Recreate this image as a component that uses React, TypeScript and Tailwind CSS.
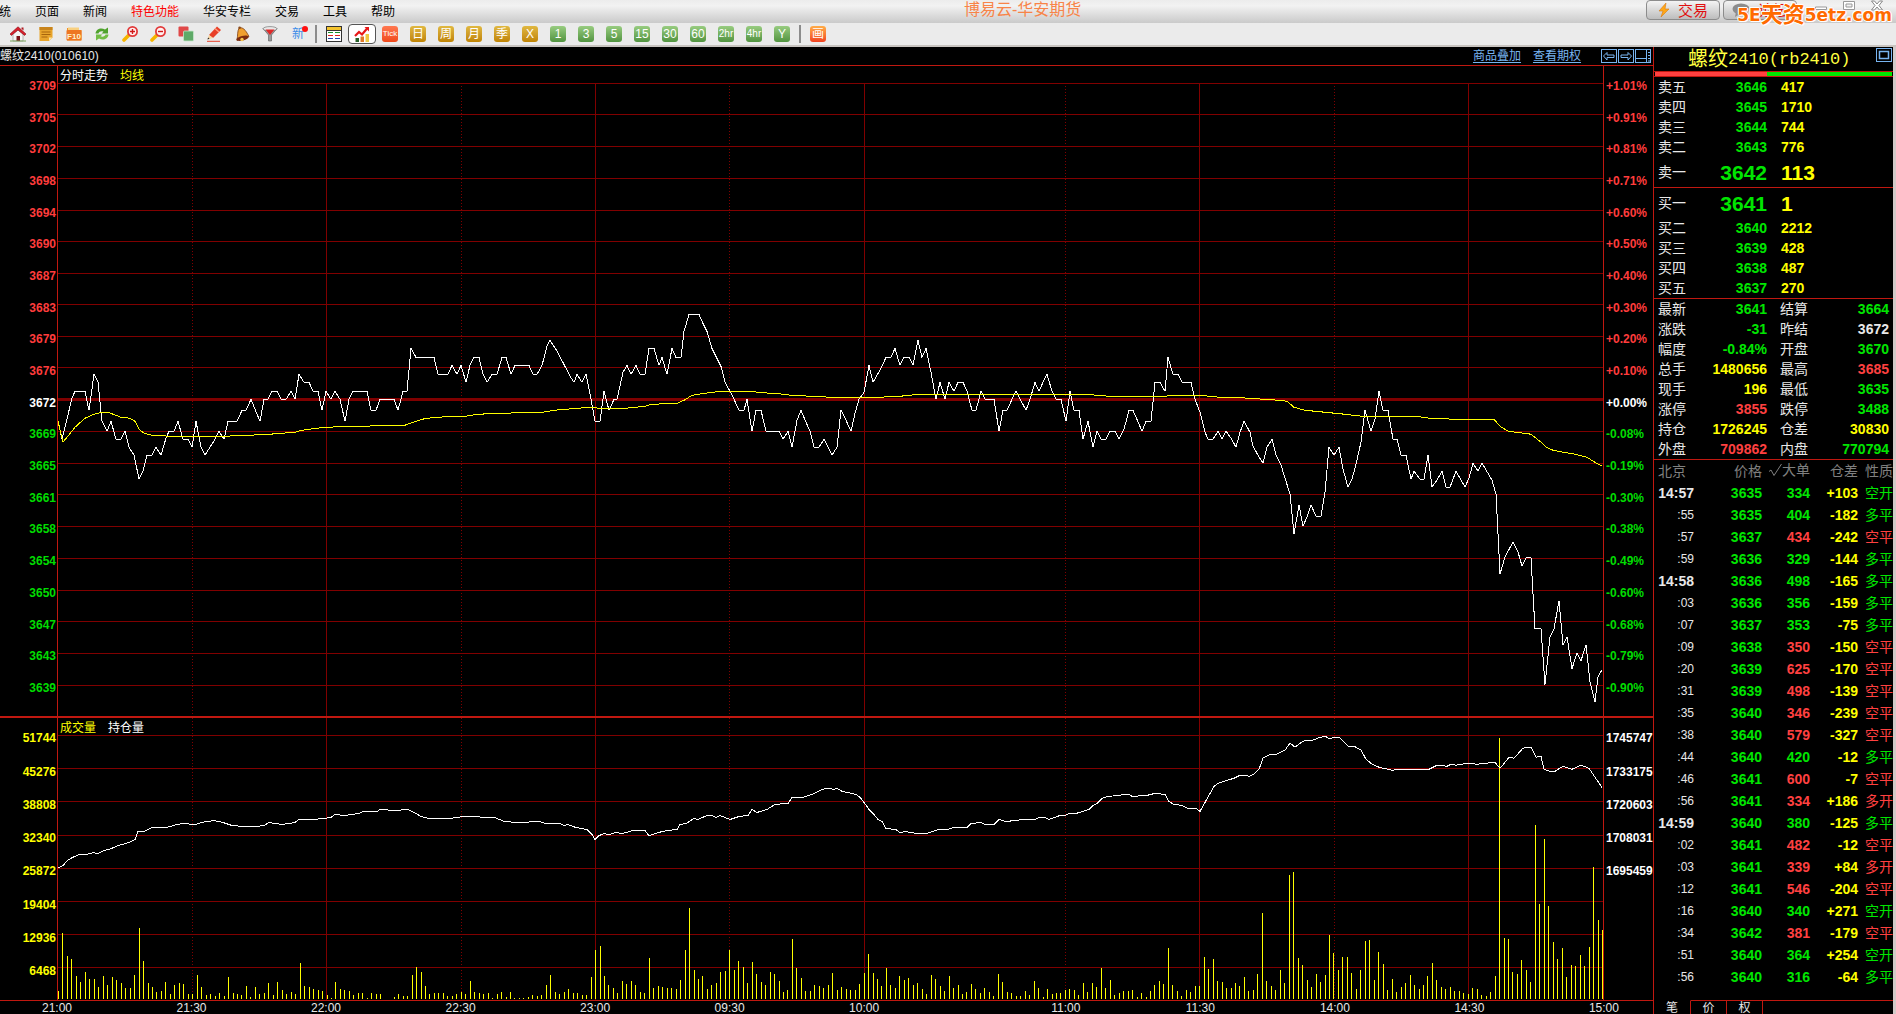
import React from "react";

const CJK = "font-['Liberation_Sans','Noto_Sans_CJK_SC',sans-serif]";

/* ---------- market data ---------- */

const PRICE_LINE =
  "58,422 62,440 72,399 75,392 85,392 89,411 94,375 98,383 102,422 107,432 111,422 116,440 121,440 125,432 129,448 134,456 139,480 143,472 147,456 152,456 156,448 161,456 166,439 169,432 174,432 178,422 183,440 188,440 192,448 196,422 201,448 205,456 210,448 215,440 219,432 224,440 228,422 237,422 242,411 246,411 251,400 255,410 260,422 264,400 268,400 272,392 277,392 281,400 286,400 291,392 295,400 299,375 304,383 309,383 313,392 318,392 322,411 326,392 331,400 335,392 340,400 345,422 349,400 353,392 367,392 371,411 376,411 380,400 394,400 398,411 403,392 407,392 411,349 416,358 434,358 438,375 448,375 452,366 457,375 461,366 466,383 470,366 474,358 479,358 483,375 487,383 492,375 497,375 502,358 506,358 511,375 515,366 529,366 533,375 537,375 542,366 547,347 550,341 556,350 565,367 570,377 574,383 577,375 582,383 586,375 591,400 595,422 600,422 604,392 609,411 614,400 617,400 623,373 627,366 631,375 636,366 640,375 645,375 649,349 654,349 659,366 662,358 667,375 672,349 676,358 681,358 684,332 689,315 699,315 703,324 707,332 712,349 721,367 725,383 730,392 734,400 739,411 744,411 747,400 752,432 756,411 761,411 766,432 779,432 783,440 788,432 792,448 797,421 801,411 806,423 810,432 814,448 819,448 824,440 828,448 832,456 837,448 841,411 846,421 851,432 855,414 859,400 864,393 869,366 873,383 882,367 886,358 891,358 895,349 900,366 904,358 909,358 913,366 918,341 922,358 926,349 931,373 936,400 940,383 945,400 949,383 954,392 958,383 963,383 967,392 972,411 976,411 981,392 985,400 994,400 999,432 1003,411 1007,411 1012,400 1016,392 1026,411 1030,400 1035,383 1039,392 1043,383 1047,375 1052,392 1056,400 1061,400 1066,422 1070,392 1074,411 1079,411 1083,440 1088,422 1093,448 1097,432 1101,440 1106,440 1110,432 1115,432 1119,440 1124,430 1129,411 1133,411 1142,432 1146,422 1151,422 1155,383 1160,383 1165,392 1168,358 1173,375 1178,375 1182,383 1191,383 1195,400 1200,413 1205,433 1208,440 1213,440 1218,432 1222,440 1226,432 1231,439 1236,448 1240,433 1244,422 1250,433 1253,447 1258,456 1263,464 1267,448 1272,440 1276,456 1281,466 1285,479 1290,495 1294,535 1299,506 1303,527 1307,518 1311,506 1316,517 1321,517 1325,493 1329,448 1334,456 1339,448 1343,470 1348,488 1352,480 1356,465 1361,443 1365,411 1371,432 1375,420 1379,392 1383,411 1388,411 1393,440 1397,440 1401,456 1406,456 1411,480 1414,472 1420,480 1424,480 1428,456 1432,488 1437,481 1442,472 1446,488 1450,488 1456,472 1465,488 1469,479 1473,464 1478,472 1482,464 1492,481 1496,495 1500,575 1505,558 1513,543 1518,553 1522,567 1526,559 1531,559 1535,630 1541,630 1545,686 1550,638 1554,630 1559,602 1563,646 1567,638 1572,670 1577,654 1581,662 1586,646 1590,683 1595,703 1598,678 1602,671";

const AVERAGE_LINE =
  "58,422 63,443 75,428 85,419 94,415 102,413 108,413 121,418 130,419 135,422 139,430 144,434 152,436 170,437 225,437 250,436 270,435 295,433 302,431 325,428 360,427 405,426 413,423 422,420 435,418 465,417 478,415 500,414 543,413 554,411 590,408 600,409 625,409 645,407 652,405 677,404 684,401 692,396 705,394 720,392 748,392 770,394 785,395 790,396 812,397 832,398 878,398 900,397 918,395 1085,395 1110,397 1165,397 1172,396 1200,396 1220,398 1255,399 1262,400 1280,401 1287,402 1294,408 1305,411 1325,413 1345,415 1362,417 1415,417 1430,419 1455,420 1494,420 1500,427 1508,432 1531,435 1541,443 1546,448 1553,451 1563,453 1575,455 1587,458 1593,462 1602,467";

const INTEREST_LINE =
  "58,868 63,866 67,861 72,858 79,855 86,855 93,853 98,854 104,851 111,849 118,846 125,844 131,842 135,840 138,832 144,832 152,828 166,828 177,825 183,824 196,825 201,823 214,821 223,823 232,826 245,827 255,827 264,826 269,823 282,825 295,823 299,820 314,820 331,818 335,815 345,816 359,814 363,812 377,812 380,810 395,811 408,810 416,814 421,817 429,819 450,819 464,817 495,818 504,822 518,823 539,822 546,824 560,824 564,826 568,825 576,828 587,830 592,835 595,840 599,836 604,834 609,835 616,833 622,834 633,831 645,831 649,836 658,833 667,831 677,830 680,825 686,824 694,819 698,820 707,816 712,816 716,818 720,816 730,820 739,817 748,816 752,810 757,813 767,810 775,805 788,804 792,798 803,798 812,795 822,790 828,789 834,790 837,789 842,792 856,795 860,798 864,803 869,810 874,815 878,820 882,822 886,829 896,830 900,833 905,832 917,834 927,834 932,832 939,830 947,830 954,828 967,828 971,824 981,823 985,825 994,825 999,820 1006,822 1024,820 1035,820 1039,818 1045,818 1049,820 1060,816 1065,816 1069,814 1076,814 1089,810 1093,806 1097,804 1102,799 1108,797 1120,796 1122,795 1129,795 1132,797 1147,796 1155,794 1165,795 1169,802 1174,805 1182,806 1188,809 1196,809 1200,812 1205,803 1214,787 1218,784 1227,781 1234,779 1240,776 1245,776 1249,777 1254,775 1259,770 1263,759 1271,755 1277,755 1285,751 1290,744 1295,748 1303,742 1313,741 1318,739 1325,737 1330,740 1334,738 1339,738 1348,747 1354,747 1361,751 1366,760 1372,765 1379,768 1392,771 1400,770 1429,770 1437,766 1447,767 1451,765 1456,766 1468,764 1477,765 1495,763 1499,768 1501,768 1509,758 1514,759 1523,749 1531,748 1536,758 1541,757 1544,770 1550,772 1555,772 1563,767 1572,770 1581,766 1589,769 1595,778 1602,788";

// One bar per trading minute, 21:00 to 15:00.
const VOLUME = [
  8, 66, 43, 40, 23, 17, 27, 20, 20, 12, 23, 14, 22, 19, 16, 11, 11, 24, 71, 38, 16, 12, 7, 8, 17, 5, 14, 16, 15, 5,
  5, 24, 12, 4, 5, 3, 6, 3, 22, 6, 5, 4, 13, 2, 12, 5, 6, 16, 4, 17, 9, 5, 7, 5, 36, 13, 12, 10, 9, 8,
  4, 1, 17, 10, 9, 8, 4, 6, 6, 1, 6, 5, 5, 0, 0, 2, 5, 3, 3, 24, 32, 27, 13, 5, 6, 6, 6, 3, 3, 5,
  7, 5, 18, 7, 6, 5, 6, 1, 5, 7, 2, 7, 1, 1, 1, 2, 4, 3, 4, 14, 24, 7, 5, 7, 10, 6, 6, 4, 4, 22,
  49, 53, 23, 14, 11, 6, 18, 15, 18, 14, 7, 6, 41, 11, 13, 12, 11, 11, 10, 19, 49, 91, 29, 20, 23, 10, 14, 16, 27, 28,
  49, 29, 38, 32, 16, 37, 25, 17, 14, 27, 25, 18, 7, 9, 60, 31, 21, 8, 8, 14, 13, 11, 14, 26, 9, 12, 10, 9, 9, 15,
  26, 45, 26, 20, 13, 31, 14, 11, 23, 19, 21, 14, 16, 10, 5, 24, 20, 13, 8, 23, 11, 14, 5, 7, 15, 10, 6, 11, 7, 3,
  25, 17, 7, 6, 3, 3, 8, 4, 18, 11, 2, 10, 5, 6, 6, 9, 10, 9, 4, 16, 7, 16, 12, 31, 11, 19, 4, 6, 8, 8,
  9, 2, 6, 2, 8, 14, 18, 15, 51, 14, 8, 3, 9, 7, 13, 13, 42, 30, 40, 18, 17, 11, 11, 16, 13, 22, 8, 9, 25, 86,
  18, 13, 9, 29, 16, 124, 127, 41, 34, 19, 12, 25, 17, 24, 64, 46, 29, 42, 42, 26, 10, 29, 58, 59, 19, 47, 35, 9, 20, 7,
  12, 16, 24, 14, 10, 14, 23, 36, 19, 12, 10, 12, 8, 8, 6, 5, 11, 10, 4, 3, 7, 23, 260, 61, 60, 27, 25, 39, 29, 17,
  174, 95, 160, 93, 57, 40, 51, 22, 34, 33, 44, 33, 52, 132, 79, 69,
];

const PRICES = [3709, 3705, 3702, 3698, 3694, 3690, 3687, 3683, 3679, 3676, 3672, 3669, 3665, 3661, 3658, 3654, 3650, 3647, 3643, 3639];
const PERCENTS = ["+1.01%", "+0.91%", "+0.81%", "+0.71%", "+0.60%", "+0.50%", "+0.40%", "+0.30%", "+0.20%", "+0.10%", "+0.00%", "-0.08%", "-0.19%", "-0.30%", "-0.38%", "-0.49%", "-0.60%", "-0.68%", "-0.79%", "-0.90%"];
const PRICE_GRID = [83, 114, 146, 178, 210, 241, 273, 305, 337, 368, 400, 432, 464, 495, 527, 559, 591, 622, 654, 686];
const VOLUME_GRID = [736, 769, 802, 835, 868, 901, 934, 967];
const VOLUMES = ["51744", "45276", "38808", "32340", "25872", "19404", "12936", "6468"];
const INTERESTS = ["1745747", "1733175", "1720603", "1708031", "1695459", "", "", ""];
const HOURS = [326, 595, 864, 1199, 1468];
const HALVES = [192, 461, 729, 1065, 1334];
const TIMES = ["21:00", "21:30", "22:00", "22:30", "23:00", "09:30", "10:00", "11:00", "11:30", "14:00", "14:30", "15:00"];

const G = "text-[#00e600]";
const R = "text-[#ff4040]";
const Y = "text-[#ffff00]";
const W = "text-[#e8e8e8]";

const ASKS = [["卖五", "3646", "417"], ["卖四", "3645", "1710"], ["卖三", "3644", "744"], ["卖二", "3643", "776"], ["卖一", "3642", "113"]];
const BIDS = [["买一", "3641", "1"], ["买二", "3640", "2212"], ["买三", "3639", "428"], ["买四", "3638", "487"], ["买五", "3637", "270"]];

const QUOTES = [
  ["最新", "3641", G, "结算", "3664", G],
  ["涨跌", "-31", G, "昨结", "3672", W],
  ["幅度", "-0.84%", G, "开盘", "3670", G],
  ["总手", "1480656", Y, "最高", "3685", R],
  ["现手", "196", Y, "最低", "3635", G],
  ["涨停", "3855", R, "跌停", "3488", G],
  ["持仓", "1726245", Y, "仓差", "30830", Y],
  ["外盘", "709862", R, "内盘", "770794", G],
];

const TICKS: [string, number, number, string, string, string][] = [
  ["14:57", 3635, 334, "+103", "空开", G],
  [":55", 3635, 404, "-182", "多平", G],
  [":57", 3637, 434, "-242", "空平", R],
  [":59", 3636, 329, "-144", "多平", G],
  ["14:58", 3636, 498, "-165", "多平", G],
  [":03", 3636, 356, "-159", "多平", G],
  [":07", 3637, 353, "-75", "多平", G],
  [":09", 3638, 350, "-150", "空平", R],
  [":20", 3639, 625, "-170", "空平", R],
  [":31", 3639, 498, "-139", "空平", R],
  [":35", 3640, 346, "-239", "空平", R],
  [":38", 3640, 579, "-327", "空平", R],
  [":44", 3640, 420, "-12", "多平", G],
  [":46", 3641, 600, "-7", "空平", R],
  [":56", 3641, 334, "+186", "多开", R],
  ["14:59", 3640, 380, "-125", "多平", G],
  [":02", 3641, 482, "-12", "空平", R],
  [":03", 3641, 339, "+84", "多开", R],
  [":12", 3641, 546, "-204", "空平", R],
  [":16", 3640, 340, "+271", "空开", G],
  [":34", 3642, 381, "-179", "空平", R],
  [":51", 3640, 364, "+254", "空开", G],
  [":56", 3640, 316, "-64", "多平", G],
];

/* ---------- toolbar icons ---------- */

const icon = (label: string, art: React.ReactNode) => ({ label, art });

const TOOLS = [
  icon("首页", <>
    <path d="M3 8v7h10V8L8 4z" fill="#f4f4f4" stroke="#8a8a8a" strokeWidth=".6" />
    <path d="M8 .8 0 8l1.400 1.400L8 4l6.600 5.400L16 8z" fill="#d8202c" stroke="#8c0c16" strokeWidth=".6" />
    <path d="M11.500 1.500h2v3l-2-1.800z" fill="#b01820" />
    <path d="M6.500 10h3.500v5H6.500z" fill="#7c1218" />
    <path d="M0 15h16" stroke="#7ba45c" strokeWidth="1" />
  </>),
  icon("公告", <>
    <path d="M1.500 1h13v10.500L11 15H1.500z" fill="#e8a52c" />
    <path d="M1.500 1h13v3h-13z" fill="#c8841c" />
    <path d="M3.500 6h9M3.500 8.500h9M3.500 11h6" stroke="#a8650c" strokeWidth="1" />
    <path d="M14.500 11.500H11V15z" fill="#fce2a0" />
  </>),
  icon("F10资料", <>
    <path d="M1 2h6l1 2h7.500v10.500H1z" fill="#f0902c" />
    <path d="M2 1.500h11V5H2z" fill="#f8d080" />
    <rect x=".5" y="4" width="15" height="10.500" rx="1" fill="#ee7722" />
    <text x="8" y="12.500" textAnchor="middle" fontSize="8" fontWeight="700" fill="#fff3d0" fontFamily="Liberation Sans">F10</text>
  </>),
  icon("刷新", <>
    <path d="M1.500 7.500C2 3 7 1 11 3.500L14 1.500v6H7.500l2-1.800C7.500 4.800 5 5.500 4.500 7.500z" fill="#4fa22c" />
    <path d="M14.500 8.500C14 13 9 15 5 12.500L2 14.500v-6h6.500l-2 1.800c2 .9 4.500.2 5-1.800z" fill="#72bd45" />
  </>),
  icon("放大", <>
    <path d="M6.500 9.500 2 14" stroke="#f5b400" strokeWidth="3.600" strokeLinecap="round" />
    <circle cx="10.500" cy="5.500" r="4.600" fill="#fff0f0" stroke="#e23a3a" strokeWidth="1.800" />
    <path d="M8 5.500h5M10.500 3v5" stroke="#d01818" strokeWidth="1.400" />
  </>),
  icon("缩小", <>
    <path d="M6.500 9.500 2 14" stroke="#f5b400" strokeWidth="3.600" strokeLinecap="round" />
    <circle cx="10.500" cy="5.500" r="4.600" fill="#fff0f0" stroke="#e23a3a" strokeWidth="1.800" />
    <path d="M8 5.500h5" stroke="#d01818" strokeWidth="1.400" />
  </>),
  icon("叠加", <>
    <rect x=".5" y=".5" width="10" height="10" rx="1" fill="#e04848" />
    <rect x="5.500" y="5" width="10" height="10" rx="1" fill="#5faa68" stroke="#c8e6cc" strokeWidth=".8" />
  </>),
  icon("画线", <>
    <path d="m3 9 8-8.500 4 3.500-8 8z" fill="#e84028" />
    <path d="m9 2.500 4 3.500" stroke="#ff9c80" strokeWidth="1.400" />
    <path d="m3 9-1.500 4.500L7 12z" fill="#f8d49c" />
    <path d="M1.500 13.500l.6-2 1.400 1.300z" fill="#222" />
    <path d="M1 15.300h13" stroke="#e84028" strokeWidth="1" />
  </>),
  icon("预警", <>
    <path d="M5.500 1.500c5 .2 7 4.500 9.500 9L3 14.500C4 9 3 5 5.500 1.500z" fill="#f0a030" stroke="#7c3c14" strokeWidth=".8" />
    <ellipse cx="8.500" cy="12.200" rx="6.300" ry="2.300" transform="rotate(-14 8.500 12.200)" fill="#7c2c10" />
    <circle cx="8" cy="13.500" r="1.700" fill="#f7c850" />
    <circle cx="5.600" cy="1.800" r="1.300" fill="#8a4a1a" />
  </>),
  icon("筛选", <>
    <path d="M1 2.500 6.500 9v6h3V9L15 2.500z" fill="#9a9a9a" stroke="#5a5a5a" strokeWidth=".6" />
    <ellipse cx="8" cy="2.800" rx="7" ry="2.200" fill="#e8e8e8" stroke="#777" strokeWidth=".7" />
    <path d="M3.500 3.500h9L8 9z" fill="#e02828" />
  </>),
];

function ToolButton({ label, children, active }: { label: string; children: React.ReactNode; active?: boolean }) {
  return (
    <button
      type="button"
      aria-label={label}
      title={label}
      className={active ? "flex h-5 w-7 items-center justify-center rounded-sm border border-[#555] bg-white" : "flex h-5 w-7 items-center justify-center"}
    >
      {children}
    </button>
  );
}

const badge = "flex h-4 w-4 items-center justify-center rounded-[3px] text-white leading-none ";
const gold = "bg-linear-to-b from-[#e0b840] to-[#c08400] text-[12px]";
const green = "bg-linear-to-b from-[#98cc80] to-[#529440] text-[12px]";
const greenSmall = "bg-linear-to-b from-[#98cc80] to-[#529440] text-[10px]";

function Toolbar() {
  return (
    <div role="toolbar" aria-label="工具栏" className="flex h-[22px] shrink-0 items-center bg-[#ebebeb] pl-1">
      {TOOLS.map((t) => (
        <ToolButton key={t.label} label={t.label}>
          <svg viewBox="0 0 16 16" className="h-4 w-4">{t.art}</svg>
        </ToolButton>
      ))}
      <button type="button" className="relative flex h-5 w-7 items-center justify-center text-[12px] leading-none text-[#3c8ce8]">
        新
        <span className="absolute top-0.5 right-1 h-1.5 w-1.5 rounded-full bg-[#ff1010]" />
      </button>
      <span className="mx-[3px] h-[18px] w-0.5 bg-[#8c8c8c]" />
      <ToolButton label="报价列表">
        <svg viewBox="0 0 16 16" className="h-4 w-4" shapeRendering="crispEdges">
          <rect x=".5" y=".5" width="15" height="15" fill="#fff" stroke="#333" />
          <path d="M1 2.500h14" stroke="#f4c430" strokeWidth="3" />
          <path d="M1 4.500h14" stroke="#333" />
          <path d="M2 6.500h5M9 6.500h5" stroke="#18902c" />
          <path d="M2 9.500h5M9 9.500h5" stroke="#e02020" />
          <path d="M2 12.500h5M9 12.500h5" stroke="#2040b0" />
        </svg>
      </ToolButton>
      <ToolButton label="分时走势" active>
        <svg viewBox="0 0 16 16" className="h-4 w-4">
          <path d="M1.500 12h3.500v4H1.500z" fill="#286028" />
          <path d="M6.500 10.500H10V16H6.500z" fill="#e07828" />
          <path d="M11.500 8H15v8h-3.500z" fill="#f0c840" />
          <path d="m1 10 4-4 3 2.500L13.500 2" fill="none" stroke="#e81818" strokeWidth="2.200" />
          <path d="M10.500 1H15v4.500z" fill="#e81818" />
        </svg>
      </ToolButton>
      <ToolButton label="Tick">
        <span className={badge + "bg-linear-to-b from-[#ff7850] to-[#f04818] text-[8px]"}>Tick</span>
      </ToolButton>
      {["日", "周", "月", "季", "X"].map((t) => (
        <ToolButton key={t} label={t}><span className={badge + gold}>{t}</span></ToolButton>
      ))}
      {["1", "3", "5", "15", "30", "60", "2hr", "4hr", "Y"].map((t) => (
        <ToolButton key={t} label={t}><span className={badge + (t.length > 2 ? greenSmall : green)}>{t}</span></ToolButton>
      ))}
      <span className="mx-[3px] h-[18px] w-0.5 bg-[#8c8c8c]" />
      <ToolButton label="画线工具">
        <span className={badge + "bg-linear-to-b from-[#ffac48] to-[#f04020] text-[12px]"}>画</span>
      </ToolButton>
    </div>
  );
}

function TitleBar() {
  const chrome = "flex h-5 w-[74px] items-center justify-center gap-2 rounded-sm border border-[#8c8c8c] bg-linear-to-b from-[#f4f4f4] to-[#bdbdbd] text-[15px] leading-none text-[#e01010]";
  return (
    <header className="relative flex h-[23px] shrink-0 items-center justify-between bg-linear-to-b from-[#ececec] via-[#f2f2f2] via-25% to-[#cacaca]">
      <nav className="-ml-px flex gap-6 text-[12px] leading-4 text-black">
        {["统", "页面", "新闻", "特色功能", "华安专栏", "交易", "工具", "帮助"].map((m) => (
          <button type="button" key={m} className={m === "特色功能" ? "text-[#ff0000]" : ""}>{m}</button>
        ))}
      </nav>
      <h1 className="absolute top-0 left-[964px] text-[16px] leading-5 whitespace-nowrap text-[#f88448]">博易云-华安期货</h1>
      <div className="flex h-full items-start">
        <button type="button" className={chrome}>
          <svg viewBox="0 0 12 16" className="h-4 w-3"><path d="M8 1 1 9h4l-2 6 8-8H7z" fill="#ffa818" stroke="#d87810" strokeWidth=".6" /></svg>
          交易
        </button>
        <button type="button" className={chrome + " ml-[3px]"}>
          <svg viewBox="0 0 18 14" className="h-3.5 w-[18px]"><ellipse cx="9" cy="6" rx="8.500" ry="5.500" fill="#8c8c8c" /><path d="m4 9-1 5 6-4z" fill="#8c8c8c" /></svg>
          论坛
        </button>
        <div className="flex w-[99px] justify-between pr-3 pl-[17px]">
          <button type="button" aria-label="最小化"><svg viewBox="0 0 14 12" className="h-3 w-3.5"><path d="M1.500 7h11v2.500h-11z" fill="#fff" stroke="#999" /></svg></button>
          <button type="button" aria-label="还原"><svg viewBox="0 0 14 12" className="h-3 w-3.5"><path d="M1.500 1.500h11v8h-11zM4 4v3h6V4z" fill="#fff" stroke="#999" fillRule="evenodd" /></svg></button>
          <button type="button" aria-label="关闭"><svg viewBox="0 0 14 12" className="h-3 w-3.5"><path d="M1.500 1h3L7 4l2.500-3h3L9 5.500l3.500 4.500h-3L7 7l-2.500 3h-3L5 5.500z" fill="#fff" stroke="#888" /></svg></button>
        </div>
      </div>
      <div className="absolute top-[3px] right-1 flex items-center font-['DejaVu_Sans','Noto_Sans_CJK_SC',sans-serif] text-[17px] leading-6 font-bold text-[#ff6a00] [text-shadow:1px_0_#fff,-1px_0_#fff,0_1px_#fff,0_-1px_#fff,1px_1px_#fff,-1px_-1px_#fff]">
        5E<span className="text-[22px]">天资</span>5etz.com
      </div>
    </header>
  );
}

/* ---------- charts ---------- */

function Verticals({ top, bottom }: { top: number; bottom: number }) {
  return (
    <>
      {HOURS.map((x) => <path key={x} d={`M${x + 0.5} ${top}V${bottom}`} stroke="#800000" vectorEffect="non-scaling-stroke" />)}
      {HALVES.map((x) => <path key={x} d={`M${x + 0.5} ${top}V${bottom}`} stroke="#800000" strokeDasharray="1 2" vectorEffect="non-scaling-stroke" />)}
    </>
  );
}

function Line({ points, color }: { points: string; color: string }) {
  return <polyline points={points} fill="none" stroke={color} strokeWidth="1" vectorEffect="non-scaling-stroke" />;
}

function Axis({ labels, color, side, size }: { labels: (string | number)[]; color: (i: number) => string; side: "left" | "right"; size: string }) {
  return (
    <div className={`flex shrink-0 flex-col pt-1 text-[12px] font-bold ${size} ${side === "left" ? "w-[57px] items-end pr-px" : "w-[49px] items-start pl-0.5"}`}>
      {labels.map((l, i) => (
        <span key={i} className={`flex flex-1 items-center leading-none ${color(i)}`}>{l}</span>
      ))}
    </div>
  );
}

const signColor = (i: number) => (i < 10 ? "text-[#ff3c3c]" : i === 10 ? "text-white" : "text-[#00dc00]");

function Charts() {
  return (
    <section aria-label="分时走势图" className="flex min-w-0 flex-1 flex-col">
      <div className="flex h-[19px] shrink-0 items-center justify-between border-b border-[#c01810] text-[12px] leading-none">
        <h2 className={W}>螺纹2410(010610)</h2>
        <div className="flex items-center text-[#78b4f0]">
          <a href="#overlay" className="underline underline-offset-2">商品叠加</a>
          <a href="#options" className="ml-3 underline underline-offset-2">查看期权</a>
          <div className="mr-0.5 ml-5 flex gap-px">
            {["M2.500 7 6 3.500V6h7v2.500H6V11z", "M13.500 7 10 3.500V6H3v2.500h7V11z", "M0 9.500h11.500M11.500 0v14M13 3.500h2M13 6.500h2M13 9.500h2M13 12h2"].map((d, i) => (
              <button type="button" key={d} aria-label={["上一个", "下一个", "布局"][i]}>
                <svg viewBox="0 0 16 14" className="h-3.5 w-4" fill="none" stroke="#78b4f0">
                  <rect x=".5" y=".5" width="15" height="13" /><path d={d} />
                </svg>
              </button>
            ))}
          </div>
        </div>
      </div>

      <div className="flex min-h-0 grow-[651] basis-0">
        <Axis labels={PRICES} color={signColor} side="left" size="pb-3" />
        <div className="relative min-w-0 flex-1 border-x border-[#c01810]">
          <svg viewBox="58 66 1545 651" preserveAspectRatio="none" shapeRendering="crispEdges" className="absolute inset-0 h-full w-full">
            {PRICE_GRID.map((y) => (
              <path key={y} d={`M58 ${y + 0.5}H1603`} stroke="#800000" strokeWidth={y === 400 ? 3 : 1} vectorEffect="non-scaling-stroke" />
            ))}
            <Verticals top={83} bottom={717} />
            <Line points={PRICE_LINE} color="#fff" />
            <Line points={AVERAGE_LINE} color="#ff0" />
          </svg>
          <div className="relative flex gap-3 px-0.5 pt-1 text-[12px] leading-3 text-white">
            分时走势<span className={Y}>均线</span>
          </div>
        </div>
        <Axis labels={PERCENTS} color={signColor} side="right" size="pb-3" />
      </div>

      <div className="flex min-h-0 grow-[283] basis-0 border-t-2 border-[#c01810]">
        <Axis labels={VOLUMES} color={() => Y} side="left" size="pb-3" />
        <div className="relative min-w-0 flex-1 border-x border-[#c01810]">
          <svg viewBox="58 719 1545 281" preserveAspectRatio="none" shapeRendering="crispEdges" className="absolute inset-0 h-full w-full">
            {VOLUME_GRID.map((y) => (
              <path key={y} d={`M58 ${y + 0.5}H1603`} stroke="#800000" vectorEffect="non-scaling-stroke" />
            ))}
            <Verticals top={719} bottom={1000} />
            {VOLUME.map((h, i) => (
              <rect key={i} x={Math.round(58 + (i * 1544) / 345)} y={999 - h} width="1" height={h} fill="#ff0" />
            ))}
            <Line points={INTEREST_LINE} color="#fff" />
          </svg>
          <div className="relative flex gap-3 px-0.5 pt-1 text-[12px] leading-3 text-white">
            <span className={Y}>成交量</span>持仓量
          </div>
        </div>
        <Axis labels={INTERESTS} color={() => "text-white"} side="right" size="pb-3" />
      </div>

      <div className="flex h-3.5 shrink-0 border-t border-[#c01810] pr-[49px] pl-[57px] text-[12px] leading-[14px] text-[#e8e8e8]">
        {TIMES.map((t) => (
          <div key={t} className={t === "15:00" ? "w-0" : t === "10:00" ? "grow-[45] basis-0" : "grow-[30] basis-0"}>
            <span className="inline-block w-8 -translate-x-1/2 text-center">{t}</span>
          </div>
        ))}
      </div>
    </section>
  );
}

/* ---------- quote panel ---------- */

function Depth({ label, rows, best }: { label: string; rows: string[][]; best: number }) {
  return (
    <table aria-label={label} className="w-full table-fixed border-separate border-spacing-0 border-b border-[#c01810] text-[14px] leading-none">
      <tbody>
        {rows.map(([name, price, size], i) => (
          <tr key={name} className={i === best ? "h-[30px]" : "h-5"}>
            <th scope="row" className={`w-[45px] p-0 pl-1 text-left font-normal ${W}`}>{name}</th>
            <td className={`w-[68px] p-0 text-right font-bold ${G} ${i === best ? "text-[21px]" : ""}`}>{price}</td>
            <td className={`p-0 pl-3.5 font-bold ${Y} ${i === best ? "text-[21px]" : ""}`}>{size}</td>
          </tr>
        ))}
      </tbody>
    </table>
  );
}

function QuotePanel() {
  return (
    <aside className="flex w-[243px] shrink-0 flex-col border-r-[3px] border-l border-r-[#d2cac8] border-l-[#c01810]">
      <div className="flex h-6 shrink-0 items-center justify-between pr-px pl-[34px]">
        <h2 className="flex items-center text-[20px] leading-none text-[#ffff40]">
          螺纹<span className="font-['Liberation_Mono',monospace] text-[17px]">2410(rb2410)</span>
        </h2>
        <button type="button" aria-label="最大化" className="self-start pt-px">
          <svg viewBox="0 0 16 14" className="h-3.5 w-4" fill="none" stroke="#78b4f0">
            <rect x=".5" y=".5" width="15" height="13" /><rect x="3.500" y="3.500" width="9" height="7" strokeWidth="1.500" />
          </svg>
        </button>
      </div>
      <div className="flex h-1.5 shrink-0 border-y border-[#c01810] px-px">
        <div className="grow-[112] bg-[#ff4040]" />
        <div className="grow-[126] bg-[#00e600]" />
      </div>
      <Depth label="卖盘" rows={ASKS} best={4} />
      <Depth label="买盘" rows={BIDS} best={0} />
      <table aria-label="行情" className="w-full table-fixed border-separate border-spacing-0 border-b border-[#c01810] text-[14px] leading-none">
        <tbody>
          {QUOTES.map(([a, av, ac, b, bv, bc]) => (
            <tr key={a} className="h-5">
              <th scope="row" className={`w-[45px] p-0 pl-1 text-left font-normal ${W}`}>{a}</th>
              <td className={`w-[68px] p-0 text-right font-bold ${ac}`}>{av}</td>
              <th scope="row" className={`w-14 p-0 pl-[13px] text-left font-normal ${W}`}>{b}</th>
              <td className={`p-0 pr-1 text-right font-bold ${bc}`}>{bv}</td>
            </tr>
          ))}
        </tbody>
      </table>
      <table aria-label="分笔成交" className="w-full table-fixed border-separate border-spacing-0 text-right text-[14px] leading-none whitespace-nowrap">
        <thead>
          <tr className="h-[22px] text-[#808080]">
            <th className="w-10 p-0 pl-1 text-left font-normal">北京</th>
            <th className="w-[68px] p-0 font-normal">价格</th>
            <th className="w-12 p-0 font-normal">
              <span className="inline-flex items-center">
                <svg viewBox="0 0 13 14" className="h-3.5 w-[13px]" fill="none" stroke="#808080"><path d="m0 8.500 2-1.500 3 5.500L12.500 1" /></svg>
                大单
              </span>
            </th>
            <th className="w-12 p-0 font-normal">仓差</th>
            <th className="p-0 font-normal">性质</th>
          </tr>
        </thead>
        <tbody>
          {TICKS.map(([time, price, size, diff, kind, kc], i) => (
            <tr key={i} className="h-[22px]">
              <td className={`p-0 ${W} ${time.length > 3 ? "font-bold" : "text-[12px]"}`}>{time}</td>
              <td className={`p-0 font-bold ${G}`}>{price}</td>
              <td className={`p-0 font-bold ${kc}`}>{size}</td>
              <td className={`p-0 font-bold ${Y}`}>{diff}</td>
              <td className={`p-0 ${kc}`}>{kind}</td>
            </tr>
          ))}
        </tbody>
      </table>
      <div className="flex-1" />
      <div role="tablist" className="flex h-3.5 shrink-0 overflow-hidden text-[12px] leading-[15px] text-[#e8e8e8]">
        {["笔", "价", "权"].map((t, i) => (
          <button type="button" role="tab" aria-selected={i === 0} key={t} className={i === 0 ? "w-[37px] border-t border-r border-t-transparent border-r-[#c01810]" : "w-9 border-t border-r border-[#c01810]"}>{t}</button>
        ))}
        <div className="flex-1 border-t border-[#c01810]" />
      </div>
    </aside>
  );
}

export default function App() {
  return (
    <div className={`flex h-screen flex-col overflow-hidden bg-black ${CJK}`}>
      <TitleBar />
      <Toolbar />
      <main className="flex min-h-0 flex-1 border-t-2 border-[#c8c4c0]">
        <Charts />
        <QuotePanel />
      </main>
    </div>
  );
}
